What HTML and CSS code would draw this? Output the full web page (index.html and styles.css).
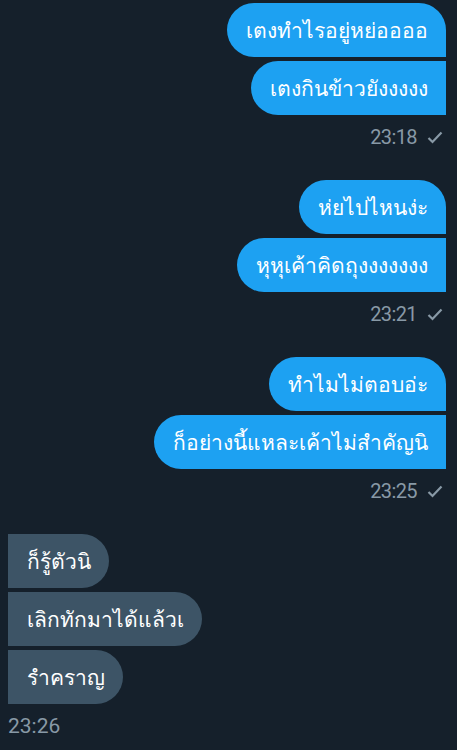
FILE: index.html
```html
<!DOCTYPE html>
<html lang="th">
<head>
    <meta charset="UTF-8">
    <meta name="viewport" content="width=device-width, initial-scale=1.0">
    <title>Messages</title>
    <link rel="stylesheet" href="styles.css">
</head>
<body>
    <div class="chat">
        <div class="group sent">
            <div class="bubble first">เตงทำไรอยู่หย่ออออ</div>
            <div class="bubble">เตงกินข้าวยังงงงง</div>
            <div class="meta">23:18 <svg class="check" viewBox="0 0 16 13"><path d="M1.5 7 L5.5 11 L14.5 1.5"/></svg></div>
        </div>
        <div class="group sent">
            <div class="bubble first">ห่ยไปไหนง่ะ</div>
            <div class="bubble">หุหุเค้าคิดถุงงงงงงง</div>
            <div class="meta">23:21 <svg class="check" viewBox="0 0 16 13"><path d="M1.5 7 L5.5 11 L14.5 1.5"/></svg></div>
        </div>
        <div class="group sent">
            <div class="bubble first">ทำไมไม่ตอบอ่ะ</div>
            <div class="bubble">ก็อย่างนี้แหละเค้าไม่สำคัญนิ</div>
            <div class="meta">23:25 <svg class="check" viewBox="0 0 16 13"><path d="M1.5 7 L5.5 11 L14.5 1.5"/></svg></div>
        </div>
        <div class="group received">
            <div class="bubble">ก็รู้ตัวนิ</div>
            <div class="bubble">เลิกทักมาได้แล้วเ</div>
            <div class="bubble">รำคราญ</div>
            <div class="meta">23:26</div>
        </div>
    </div>
</body>
</html>
```

FILE: styles.css
```css
body {
    margin: 0;
    background-color: #15202b;
    font-family: 'Roboto', 'Noto Sans', sans-serif;
    color: #fff;
}
.chat {
    display: flex;
    flex-direction: column;
    gap: 32px;
    padding: 3px 11px 0 8px;
}
.group {
    display: flex;
    flex-direction: column;
    gap: 4px;
}
.sent {
    align-items: flex-end;
}
.received {
    align-items: flex-start;
}
.bubble {
    height: 54px;
    box-sizing: border-box;
    display: flex;
    align-items: center;
    padding: 0 18px 0 19px;
    font-size: 21px;
    white-space: nowrap;
}
.sent .bubble {
    background-color: #1da1f2;
    border-radius: 27px 0 0 27px;
}
.sent .bubble.first {
    border-radius: 27px 27px 0 27px;
}
.received .bubble {
    background-color: #3d5466;
    border-radius: 0 27px 27px 0;
}
.meta {
    display: flex;
    align-items: center;
    gap: 10px;
    margin-top: 7px;
    padding-right: 3px;
    font-size: 20px;
    line-height: 22px;
    letter-spacing: -0.6px;
    color: #8899a6;
}
.received .meta {
    font-size: 21px;
    letter-spacing: 0;
    padding-right: 0;
}
.check {
    width: 16px;
    height: 13px;
    fill: none;
    stroke: #8899a6;
    stroke-width: 2.2;
}
```
